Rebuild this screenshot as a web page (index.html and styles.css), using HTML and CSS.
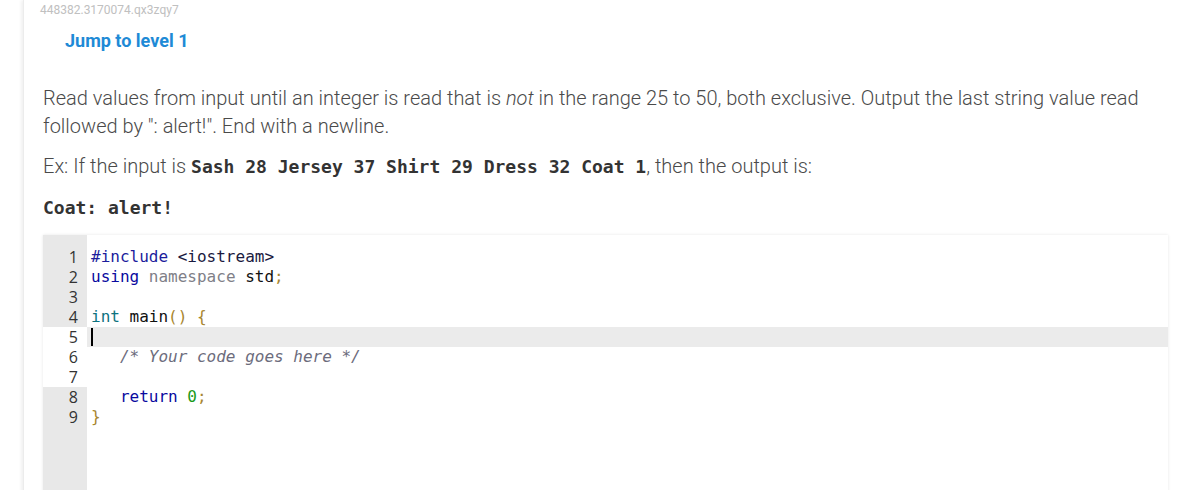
FILE: index.html
```html
<!DOCTYPE html>
<html>
<head>
<meta charset="utf-8">
<link rel="stylesheet" href="styles.css">
</head>
<body>
<div class="card">
  <div class="uid">448382.3170074.qx3zqy7</div>
  <div class="jump">Jump to level 1</div>
  <p class="prompt">Read values from input until an integer is read that is <em>not</em> in the range 25 to 50, both exclusive. Output the last string value read followed by ": alert!". End with a newline.</p>
  <p class="prompt ex">Ex: If the input is <code class="inl">Sash 28 Jersey 37 Shirt 29 Dress 32 Coat 1</code>, then the output is:</p>
  <pre class="out">Coat: alert!</pre>
  <div class="editor">
    <div class="gutter">
      <div class="num">1</div>
      <div class="num">2</div>
      <div class="num">3</div>
      <div class="num">4</div>
      <div class="num lit">5</div>
      <div class="num lit">6</div>
      <div class="num lit">7</div>
      <div class="num">8</div>
      <div class="num">9</div>
    </div>
    <div class="code">
      <div class="ln"><span class="pp">#include</span> <span class="inc">&lt;iostream&gt;</span></div>
      <div class="ln"><span class="kw">using</span> <span class="ns">namespace</span> std<span class="pn">;</span></div>
      <div class="ln"> </div>
      <div class="ln"><span class="ty">int</span> main<span class="pn">()</span> <span class="pn">{</span></div>
      <div class="ln active"><span class="caret"></span></div>
      <div class="ln">   <span class="cm">/* Your code goes here */</span></div>
      <div class="ln"> </div>
      <div class="ln">   <span class="kw">return</span> <span class="nm">0</span><span class="pn">;</span></div>
      <div class="ln"><span class="pn">}</span></div>
    </div>
  </div>
</div>
</body>
</html>
```

FILE: styles.css
```css
html, body {
  margin: 0;
  padding: 0;
  background: #ffffff;
  overflow: hidden;
}

.card {
  margin-left: 23px;
  padding: 0 9px 0 19px;
  min-height: 490px;
  border-left: 1px solid #ececec;
  box-shadow: -2px 0 3px rgba(0, 0, 0, 0.06);
  font-family: Roboto, "Liberation Sans", sans-serif;
}

.uid {
  font-size: 12px;
  line-height: 14px;
  color: #c0c0c0;
  padding-top: 3px;
  margin-left: -3px;
}

.jump {
  margin: 13px 0 0 22px;
  font-size: 18px;
  line-height: 22px;
  font-weight: 700;
  color: #1e8ad6;
}

.prompt {
  margin: 32px 0 0 0;
  font-size: 20px;
  font-weight: 300;
  line-height: 28px;
  color: #4a4a4a;
}

.prompt.ex {
  margin-top: 12px;
}

.inl {
  font-family: "DejaVu Sans Mono", "Liberation Mono", monospace;
  font-weight: 700;
  font-size: 18px;
  color: #333333;
}

.out {
  margin: 17px 0 0 0;
  font-family: "DejaVu Sans Mono", "Liberation Mono", monospace;
  font-size: 18px;
  font-weight: 700;
  line-height: 20px;
  color: #333333;
}

.editor {
  margin-top: 17px;
  display: flex;
  min-height: 260px;
  background: #ffffff;
  box-shadow: 0 0 3px rgba(0, 0, 0, 0.1);
}

.gutter {
  width: 44px;
  flex: none;
  background: #e8e8e8;
  padding-top: 12px;
}

.num {
  height: 20px;
  line-height: 20px;
  text-align: right;
  padding-right: 9px;
  font-family: "Open Sans", "Liberation Sans", sans-serif;
  font-size: 16px;
  color: #333333;
}

.num.lit {
  background: #ffffff;
}

.code {
  flex: 1;
  padding-top: 12px;
}

.ln {
  height: 20px;
  line-height: 20px;
  padding-left: 4px;
  white-space: pre;
  font-family: "DejaVu Sans Mono", "Liberation Mono", monospace;
  font-size: 16px;
  color: #111111;
}

.ln.active {
  background: #ebebeb;
}

.caret {
  display: inline-block;
  width: 2px;
  height: 18px;
  margin-top: 1px;
  vertical-align: top;
  background: #000000;
}

.pp { color: #1c1c9c; }
.inc { color: #1a1a40; }
.kw { color: #0a0aa0; }
.ns { color: #7f7f88; }
.ty { color: #0d7380; }
.pn { color: #a8862f; }
.cm { color: #6c6c7c; font-style: italic; }
.nm { color: #1a9a1a; }
```
